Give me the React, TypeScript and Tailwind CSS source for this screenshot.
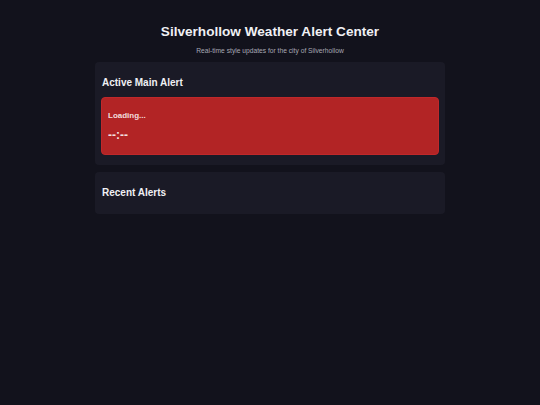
export default function App() {
  return (
    <div
      className="min-h-screen w-full bg-[#12121c] text-[#e6e6ea]"
      style={{ fontFamily: '"Liberation Sans", Arial, sans-serif' }}
    >
      <div className="mx-auto w-[350px] pt-[24px]">
        <h1 className="text-center text-[13.6px] font-bold leading-[16px] text-[#f0f0f4]">
          Silverhollow Weather Alert Center
        </h1>
        <p className="mt-[7px] text-center text-[6.7px] leading-[8px] text-[#a8a8b4]">
          Real-time style updates for the city of Silverhollow
        </p>

        <section className="mt-[7px] rounded-[4px] bg-[#1a1a26] px-[6px] pt-[14px] pb-[10px]">
          <h2 className="pl-px text-[10px] font-bold leading-[14px] text-[#f0f0f4]">Active Main Alert</h2>
          <div className="mt-[7px] h-[58px] rounded-[4px] border border-[#c0282a] bg-[#b22425] px-[6px] pt-[13px]">
            <div className="text-[8px] font-bold leading-[10px] text-[#f3dede]">Loading...</div>
            <div className="mt-[8px] text-[12px] font-bold leading-[13px] text-[#f3dede]">--:--</div>
          </div>
        </section>

        <section className="mt-[7px] h-[42px] rounded-[4px] bg-[#1a1a26] px-[6px] pt-[14px]">
          <h2 className="pl-px text-[10px] font-bold leading-[14px] text-[#f0f0f4]">Recent Alerts</h2>
        </section>
      </div>
    </div>
  );
}
